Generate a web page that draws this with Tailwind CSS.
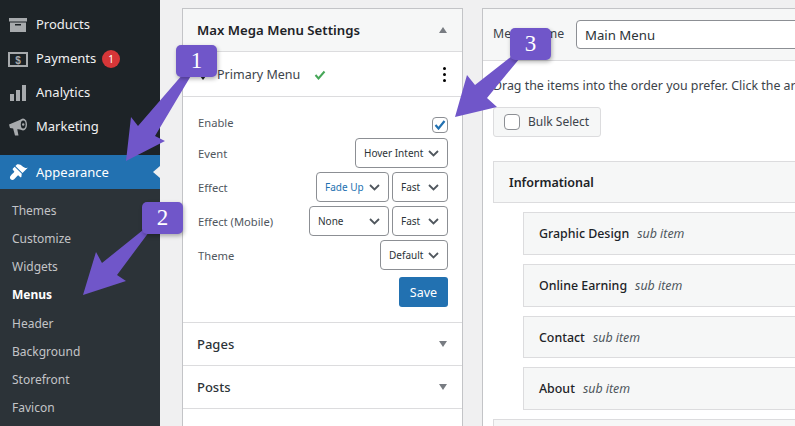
<!DOCTYPE html>
<html lang="en">
<head>
    <meta charset="UTF-8">
    <title>Menus</title>
    <script src="https://cdn.jsdelivr.net/npm/@tailwindcss/browser@4"></script>
</head>
<body class="relative w-[795px] h-[426px] overflow-hidden bg-[#f0f0f1] font-['Noto_Sans',sans-serif] text-[#2c3338]">
    <div class="flex h-[426px] overflow-hidden">
        <!-- Sidebar -->
        <aside class="w-[160px] shrink-0 bg-[#1d2327] flex flex-col pt-[8px]">
            <div class="h-[34px] flex items-center gap-[9px] pl-[9px] text-[13px] text-[#f0f0f1]">
                <svg class="w-[18px] h-[14px] shrink-0" viewBox="0 0 18 14" fill="#a7aaad"><path d="M0 0h18v3.500H0zM1 4.500h16V14H1zM6 6v1.500h6V6z" fill-rule="evenodd"/></svg>
                <span>Products</span>
            </div>
            <div class="h-[34px] flex items-center gap-[8px] pl-[8px] text-[13px] text-[#f0f0f1]">
                <svg class="w-[20px] h-[15px] shrink-0" viewBox="0 0 20 15" fill="none"><rect x="1" y="1" width="18" height="13" stroke="#a7aaad" stroke-width="2"/><text x="10" y="11.500" text-anchor="middle" font-size="10" font-weight="700" fill="#a7aaad" font-family="Liberation Sans">$</text></svg>
                <span>Payments</span>
                <span class="w-[18px] h-[18px] -ml-[2px] rounded-full bg-[#d63638] text-white text-[10px] flex items-center justify-center">1</span>
            </div>
            <div class="h-[34px] flex items-center gap-[10px] pl-[10px] text-[13px] text-[#f0f0f1]">
                <svg class="w-[16px] h-[16px] shrink-0" viewBox="0 0 16 16" fill="#a7aaad"><path d="M0 9h4v7H0zM6 5h4v11H6zM12 0h4v16h-4z"/></svg>
                <span>Analytics</span>
            </div>
            <div class="h-[34px] flex items-center gap-[9px] pl-[9px] text-[13px] text-[#f0f0f1]">
                <svg class="w-[18px] h-[18px] shrink-0" viewBox="0 0 18 18" fill="#a7aaad">
                    <path d="M0 6.500L12 1.500l2 10.500L1 10zM4 10h4l1.500 7.500H6z"/>
                    <ellipse cx="14" cy="6.500" rx="4" ry="6"/>
                    <ellipse cx="14.200" cy="6.500" rx="2.400" ry="4" fill="#1d2327"/>
                    <circle cx="14.200" cy="6.500" r="1.200"/>
                </svg>
                <span>Marketing</span>
            </div>
            <div class="relative h-[34px] mt-[11px] bg-[#2271b1] flex items-center gap-[8px] pl-[8px] text-[13px] text-white">
                <svg class="w-[20px] h-[20px] shrink-0" viewBox="0 0 20 20" fill="#fff">
                    <path d="M14.480 11.060L7.410 3.990l1.500-1.500c.5-.56 2.300-.47 3.510.32 1.210.8 1.430 1.280 2.910 2.100 1.180.64 2.450 1.260 4.450.85z"/>
                    <path d="M13.770 11.770L6.700 4.700 4.930 6.470c-.39.39-.39 1.020 0 1.410l1.060 1.060c.39.39.39 1.020 0 1.410-.6.6-2.500 2.500-3.300 3.300-1 1-1 2.500 0 3.500s2.500 1 3.500 0l3.300-3.300c.39-.39 1.020-.39 1.410 0l1.060 1.060c.39.39 1.020.39 1.410 0z"/>
                </svg>
                <span class="pt-[2px]">Appearance</span>
                <span class="absolute right-0 top-[11px] border-y-[6px] border-y-transparent border-r-[7px] border-r-[#f0f0f1]"></span>
            </div>
            <div class="flex-1 bg-[#2c3338] pt-[8px] pl-[12px] text-[12px] text-[#c3c4c7]">
                <div class="h-[28px] flex items-center">Themes</div>
                <div class="h-[28px] flex items-center">Customize</div>
                <div class="h-[28px] flex items-center">Widgets</div>
                <div class="h-[28px] flex items-center font-bold text-white">Menus</div>
                <div class="h-[29px] flex items-center">Header</div>
                <div class="h-[28px] flex items-center">Background</div>
                <div class="h-[28px] flex items-center">Storefront</div>
                <div class="h-[28px] flex items-center">Favicon</div>
            </div>
        </aside>

        <!-- Settings panel -->
        <section class="w-[281px] h-[440px] shrink-0 ml-[22px] mt-[8px] border border-[#c3c4c7] bg-white">
            <div class="h-[43px] flex items-center justify-between px-[14px] bg-[#f6f7f7] border-b border-[#dcdcde] text-[13.200px] font-semibold text-[#1d2327]">
                <span class="pt-[2px]">Max Mega Menu Settings</span>
                <span class="mr-[1px] border-x-[4px] border-x-transparent border-b-[6px] border-b-[#787c82]"></span>
            </div>
            <div class="relative h-[45px] flex items-center justify-between pl-[34px] pr-[16px] border-b border-[#dcdcde] text-[12.500px] text-[#3c434a]">
                <span class="absolute left-[17px] top-[24px] border-x-[3px] border-x-transparent border-t-[4px] border-t-[#1d2327]"></span>
                <span class="flex items-center gap-[14px] pt-[2px]">Primary Menu
                    <svg class="w-[12px] h-[10px]" viewBox="0 0 12 10" fill="none"><path d="M1.500 5l3 3.500L10.500 1.500" stroke="#46a758" stroke-width="2"/></svg>
                </span>
                <span class="flex flex-col gap-[3px]">
                    <i class="w-[3px] h-[3px] bg-black rounded-full"></i>
                    <i class="w-[3px] h-[3px] bg-black rounded-full"></i>
                    <i class="w-[3px] h-[3px] bg-black rounded-full"></i>
                </span>
            </div>
            <div class="h-[226px] border-b border-[#dcdcde] pl-[15px] pr-[14px] text-[11.200px] text-[#50575e]">
                <div class="h-[41px] pt-[12px] flex justify-between items-center">
                    <span>Enable</span>
                    <span class="w-[16px] h-[16px] border border-[#8c8f94] rounded-[4px] flex items-center justify-center mt-[2px]">
                        <svg class="w-[12px] h-[10px]" viewBox="0 0 12 10" fill="none"><path d="M1.500 5l3 3.500L10.500 1" stroke="#2271b1" stroke-width="2.200"/></svg>
                    </span>
                </div>
                <div class="h-[30px] flex justify-between items-center">
                    <span class="pt-[2px]">Event</span>
                    <div class="w-[93px] h-[30px] flex items-center justify-between pl-[8px] pr-[8px] border border-[#8c8f94] rounded-[4px] text-[10px] text-[#2c3338] whitespace-nowrap">Hover Intent<svg class="w-[11px] h-[7px]" viewBox="0 0 11 7" fill="none"><path d="M1 1l4.500 4.500L10 1" stroke="#50575e" stroke-width="1.800"/></svg></div>
                </div>
                <div class="h-[30px] mt-[4px] flex justify-between items-center">
                    <span class="pt-[2px]">Effect</span>
                    <div class="flex gap-[3px]">
                        <div class="w-[73px] h-[30px] flex items-center justify-between pl-[8px] pr-[8px] border border-[#8c8f94] rounded-[4px] text-[10px] text-[#2271b1] whitespace-nowrap">Fade Up<svg class="w-[11px] h-[7px]" viewBox="0 0 11 7" fill="none"><path d="M1 1l4.500 4.500L10 1" stroke="#50575e" stroke-width="1.800"/></svg></div>
                        <div class="w-[56px] h-[30px] flex items-center justify-between pl-[8px] pr-[8px] border border-[#8c8f94] rounded-[4px] text-[10px] text-[#2c3338]">Fast<svg class="w-[11px] h-[7px]" viewBox="0 0 11 7" fill="none"><path d="M1 1l4.500 4.500L10 1" stroke="#50575e" stroke-width="1.800"/></svg></div>
                    </div>
                </div>
                <div class="h-[30px] mt-[4px] flex justify-between items-center">
                    <span class="pt-[2px]">Effect (Mobile)</span>
                    <div class="flex gap-[3px]">
                        <div class="w-[80px] h-[30px] flex items-center justify-between pl-[8px] pr-[8px] border border-[#8c8f94] rounded-[4px] text-[10px] text-[#2c3338]">None<svg class="w-[11px] h-[7px]" viewBox="0 0 11 7" fill="none"><path d="M1 1l4.500 4.500L10 1" stroke="#50575e" stroke-width="1.800"/></svg></div>
                        <div class="w-[56px] h-[30px] flex items-center justify-between pl-[8px] pr-[8px] border border-[#8c8f94] rounded-[4px] text-[10px] text-[#2c3338]">Fast<svg class="w-[11px] h-[7px]" viewBox="0 0 11 7" fill="none"><path d="M1 1l4.500 4.500L10 1" stroke="#50575e" stroke-width="1.800"/></svg></div>
                    </div>
                </div>
                <div class="h-[30px] mt-[4px] flex justify-between items-center">
                    <span class="pt-[2px]">Theme</span>
                    <div class="w-[68px] h-[30px] flex items-center justify-between pl-[8px] pr-[8px] border border-[#8c8f94] rounded-[4px] text-[10px] text-[#2c3338]">Default<svg class="w-[11px] h-[7px]" viewBox="0 0 11 7" fill="none"><path d="M1 1l4.500 4.500L10 1" stroke="#50575e" stroke-width="1.800"/></svg></div>
                </div>
                <div class="mt-[7px] flex justify-end">
                    <div class="w-[49px] h-[30px] pt-[2px] bg-[#2271b1] rounded-[3px] text-white text-[12.500px] flex items-center justify-center">Save</div>
                </div>
            </div>
            <div class="h-[43px] flex items-center justify-between px-[14px] border-b border-[#dcdcde] text-[13px] font-medium text-[#2c3338]">
                <span class="pt-[2px]">Pages</span>
                <span class="mr-[1px] border-x-[4px] border-x-transparent border-t-[6px] border-t-[#787c82]"></span>
            </div>
            <div class="h-[43px] flex items-center justify-between px-[14px] border-b border-[#dcdcde] text-[13px] font-medium text-[#2c3338]">
                <span class="pt-[2px]">Posts</span>
                <span class="mr-[1px] border-x-[4px] border-x-transparent border-t-[6px] border-t-[#787c82]"></span>
            </div>
            <div class="h-[43px] flex items-center justify-between px-[14px] text-[13px] font-medium text-[#2c3338]">
                <span class="pt-[2px]">Downloads</span>
                <span class="mr-[1px] border-x-[4px] border-x-transparent border-t-[6px] border-t-[#787c82]"></span>
            </div>
        </section>

        <!-- Menu structure panel -->
        <section class="w-[340px] h-[440px] shrink-0 ml-[19px] mt-[8px] border border-[#c3c4c7] bg-white">
            <div class="h-[52px] flex items-center pl-[10px] bg-[#f6f7f7] border-b border-[#dcdcde] text-[12.300px] text-[#3c434a]">
                <span class="whitespace-nowrap w-[83px] shrink-0">Menu Name</span>
                <div class="w-[300px] h-[29px] pt-[2px] shrink-0 flex items-center pl-[8px] border border-[#8c8f94] rounded-[4px] bg-white text-[13.200px] text-[#2c3338]">Main Menu</div>
            </div>
            <div class="pl-[10px] pt-[16px] text-[12.400px] text-[#3c434a]">
                <p class="whitespace-nowrap h-[22px]">Drag the items into the order you prefer. Click the arrow</p>
                <div class="mt-[8px] w-[108px] h-[30px] flex items-center gap-[8px] pl-[10px] bg-[#f6f7f7] border border-[#dcdcde] rounded-[3px]">
                    <span class="w-[16px] h-[16px] bg-white border border-[#8c8f94] rounded-[4px]"></span>
                    <span class="text-[12px]">Bulk Select</span>
                </div>
                <div class="mt-[24px] h-[42px] pt-[2px] flex items-center pl-[15px] bg-[#f6f7f7] border border-[#dcdcde] text-[12.500px] font-semibold text-[#1d2327] w-[320px]">Informational</div>
                <div class="ml-[30px] mt-[9px] flex flex-col gap-[9px] text-[12.400px] font-medium text-[#1d2327]">
                    <div class="h-[43px] pt-[2px] flex items-center gap-[8px] pl-[15px] bg-[#f6f7f7] border border-[#dcdcde]">Graphic Design <em class="font-normal text-[#50575e]">sub item</em></div>
                    <div class="h-[43px] pt-[2px] flex items-center gap-[8px] pl-[15px] bg-[#f6f7f7] border border-[#dcdcde]">Online Earning <em class="font-normal text-[#50575e]">sub item</em></div>
                    <div class="h-[42px] pt-[2px] flex items-center gap-[8px] pl-[15px] bg-[#f6f7f7] border border-[#dcdcde]">Contact <em class="font-normal text-[#50575e]">sub item</em></div>
                    <div class="h-[43px] pt-[2px] flex items-center gap-[8px] pl-[15px] bg-[#f6f7f7] border border-[#dcdcde]">About <em class="font-normal text-[#50575e]">sub item</em></div>
                </div>
                <div class="mt-[9px] h-[42px] bg-[#f6f7f7] border border-[#dcdcde]"></div>
            </div>
        </section>
    </div>

    <!-- Tutorial annotations drawn over the screenshot -->
    <svg class="absolute left-0 top-0 w-[795px] h-[426px]" viewBox="0 0 795 426">
        <polygon fill="#7056c9" points="126,161 131,117 138,126 183,74 192,74 155,136 165,141"/>
        <polygon fill="#7056c9" points="83,295 96,252 102,263 143,230 149,232 117,275 126,281"/>
        <polygon fill="#7056c9" points="455,117 467,75 475,85 512,56 520,58 487,98 497,107"/>
    </svg>
    <div class="absolute left-[176px] top-[45px] w-[41px] h-[32px] rounded-[5px] bg-[#7056c9] shadow-[1px_2px_4px_rgba(0,0,0,0.3)] text-white text-[23px] font-['Liberation_Serif',serif] flex items-center justify-center">1</div>
    <div class="absolute left-[142px] top-[202px] w-[41px] h-[32px] rounded-[5px] bg-[#7056c9] shadow-[1px_2px_4px_rgba(0,0,0,0.3)] text-white text-[23px] font-['Liberation_Serif',serif] flex items-center justify-center">2</div>
    <div class="absolute left-[510px] top-[28px] w-[41px] h-[32px] rounded-[5px] bg-[#7056c9] shadow-[1px_2px_4px_rgba(0,0,0,0.3)] text-white text-[23px] font-['Liberation_Serif',serif] flex items-center justify-center">3</div>
</body>
</html>
